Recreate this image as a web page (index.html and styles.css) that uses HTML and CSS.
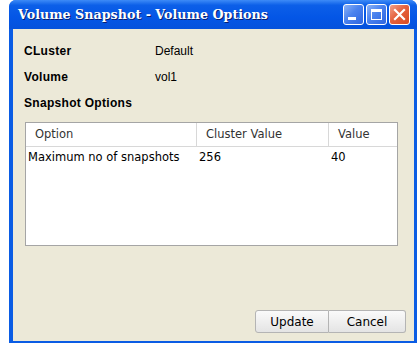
FILE: index.html
```html
<!DOCTYPE html>
<html lang="en">
<head>
  <meta charset="UTF-8">
  <title>Volume Snapshot - Volume Options</title>
  <link rel="stylesheet" href="styles.css">
</head>
<body>

  <div class="window">
    <div class="titlebar">
      <span class="title">Volume Snapshot - Volume Options</span>
      <div class="controls">
        <div class="ctl">
          <svg width="21" height="21" viewBox="0 0 21 21"><rect x="5" y="13" width="8" height="3" fill="#fff"/></svg>
        </div>
        <div class="ctl">
          <svg width="21" height="21" viewBox="0 0 21 21"><rect x="5.5" y="5.5" width="10" height="10" fill="none" stroke="#fff" stroke-width="1"/><rect x="5" y="5" width="11" height="3" fill="#fff"/></svg>
        </div>
        <div class="ctl close">
          <svg width="21" height="21" viewBox="0 0 21 21"><path d="M6 6 L15 15 M15 6 L6 15" stroke="#fff" stroke-width="2.2" stroke-linecap="square"/></svg>
        </div>
      </div>
    </div>

    <div class="content">
      <div class="row">
        <span class="label">CLuster</span>
        <span class="value">Default</span>
      </div>
      <div class="row">
        <span class="label">Volume</span>
        <span class="value">vol1</span>
      </div>
      <div class="row">
        <span class="label">Snapshot Options</span>
      </div>

      <div class="table">
        <div class="thead">
          <div class="th c1">Option</div>
          <div class="th c2">Cluster Value</div>
          <div class="th c3">Value</div>
        </div>
        <div class="tr">
          <div class="td c1">Maximum no of snapshots</div>
          <div class="td c2">256</div>
          <div class="td c3">40</div>
        </div>
      </div>

      <div class="buttons">
        <button class="btn">Update</button>
        <button class="btn">Cancel</button>
      </div>
    </div>
  </div>

</body>
</html>
```

FILE: styles.css
```css
body {
  margin: 0;
  background: #fff;
  height: 343px;
  overflow: hidden;
}

.window {
  margin-left: 9px;
  width: 408px;
  height: 343px;
  display: flex;
  flex-direction: column;
  background: #0a5ce4;
  border-radius: 7px 7px 0 0;
  box-sizing: border-box;
  padding: 0 3px 2px 4px;
}

.titlebar {
  height: 29px;
  display: flex;
  align-items: center;
  justify-content: space-between;
  background: linear-gradient(#3d8bf7 0%, #0c5fe8 18%, #0456e6 60%, #0552dc 100%);
  margin: 0 -3px 0 -4px;
  padding: 0 3px 0 9px;
  border-radius: 7px 7px 0 0;
}

.title {
  font-family: "DejaVu Serif", serif;
  font-weight: bold;
  font-size: 12.7px;
  color: #fff;
  text-shadow: 1px 1px 0 #0a1e6e;
}

.controls {
  display: flex;
  gap: 2px;
  padding-right: 4px;
}

.ctl {
  width: 21px;
  height: 21px;
  box-sizing: border-box;
  border: 1px solid #fff;
  border-radius: 3px;
  background: linear-gradient(135deg, #8bb2f6 0%, #4a82ee 45%, #2f66e0 100%);
}

.ctl svg {
  display: block;
  margin: -1px;
}

.close {
  background: linear-gradient(135deg, #f2a08a 0%, #e5623e 45%, #d94a22 100%);
}

.content {
  flex: 1;
  background: #ece9d8;
  display: flex;
  flex-direction: column;
  padding: 9px 8px 8px 11px;
  font-family: "Liberation Sans", Arial, sans-serif;
  font-size: 12px;
  color: #000;
}

.row {
  display: flex;
  height: 26px;
  align-items: center;
}

.label {
  font-weight: bold;
  width: 131px;
  letter-spacing: 0.3px;
}

.table {
  margin: 6px 0 0 1px;
  width: 373px;
  height: 124px;
  box-sizing: border-box;
  background: #fff;
  border: 1px solid #a5a5a5;
  font-family: "DejaVu Sans", sans-serif;
  font-size: 11.5px;
}

.thead {
  display: flex;
  height: 23px;
  border-bottom: 1px solid #d8d8d8;
  color: #333;
}

.th {
  line-height: 23px;
  padding-left: 9px;
  box-sizing: border-box;
  border-right: 1px solid #d8d8d8;
}

.th.c3 {
  border-right: none;
}

.tr {
  display: flex;
  height: 20px;
  line-height: 20px;
}

.td {
  padding-left: 2px;
  box-sizing: border-box;
}

.c1 { width: 171px; }
.c2 { width: 132px; }
.c3 { flex: 1; }

.buttons {
  margin-top: auto;
  display: flex;
  justify-content: flex-end;
}

.btn {
  height: 23px;
  font-family: "DejaVu Sans", sans-serif;
  font-size: 12px;
  color: #000;
  background: linear-gradient(#fafafa, #e4e4e4);
  border: 1px solid #b4b4b4;
  padding: 0;
  margin: 0;
}

.btn:first-child {
  width: 74px;
  border-radius: 3px 0 0 3px;
}

.btn:last-child {
  width: 77px;
  border-left: none;
  border-radius: 0 3px 3px 0;
}
```
